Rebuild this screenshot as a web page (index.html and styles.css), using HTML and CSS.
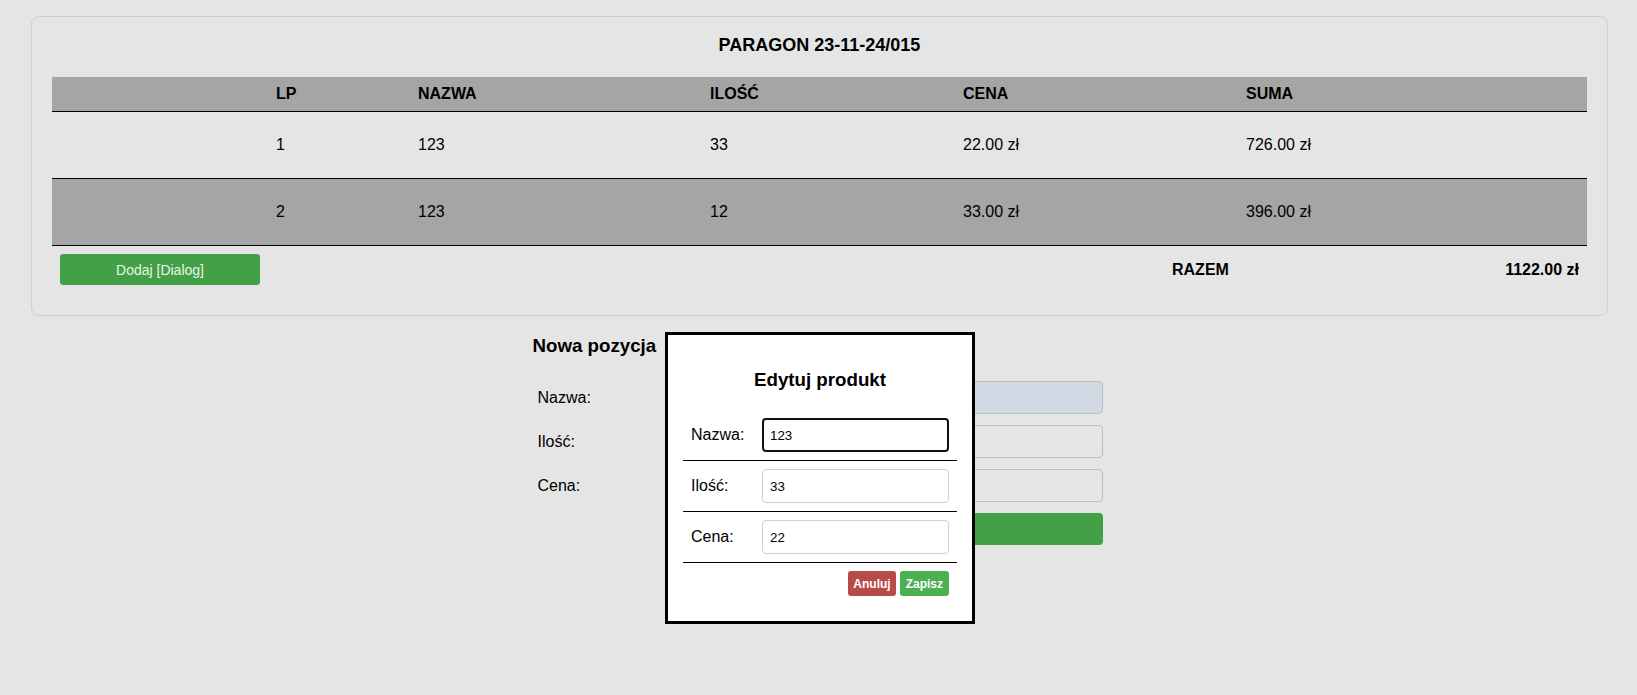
FILE: index.html
```html
<!DOCTYPE html>
<html lang="pl">
<head>
<meta charset="utf-8">
<title>Paragon</title>
<link rel="stylesheet" href="styles.css">
</head>
<body>
<section class="receipt">
  <div class="receipt-title">PARAGON 23-11-24/015</div>
  <table class="items">
    <colgroup>
      <col class="c-sel"><col class="c-lp"><col class="c-name"><col class="c-qty"><col class="c-price"><col class="c-sum">
    </colgroup>
    <thead>
      <tr><th></th><th>LP</th><th>NAZWA</th><th>ILOŚĆ</th><th>CENA</th><th>SUMA</th></tr>
    </thead>
    <tbody>
      <tr><td></td><td>1</td><td>123</td><td>33</td><td>22.00 zł</td><td>726.00 zł</td></tr>
      <tr class="alt"><td></td><td>2</td><td>123</td><td>12</td><td>33.00 zł</td><td>396.00 zł</td></tr>
    </tbody>
  </table>
  <div class="receipt-footer">
    <button class="btn-add" type="button">Dodaj [Dialog]</button>
    <div class="total-label">RAZEM</div>
    <div class="total-value">1122.00 zł</div>
  </div>
</section>

<form class="new-item">
  <h3 class="new-title">Nowa pozycja</h3>
  <div class="new-grid">
    <label class="new-label" for="n-name">Nazwa:</label>
    <input id="n-name" class="new-input autofill" type="text">
    <label class="new-label" for="n-qty">Ilość:</label>
    <input id="n-qty" class="new-input" type="text">
    <label class="new-label" for="n-price">Cena:</label>
    <input id="n-price" class="new-input" type="text">
    <span></span>
    <button class="new-submit" type="button">Dodaj</button>
  </div>
</form>

<div class="dialog" role="dialog">
  <h3 class="dialog-title">Edytuj produkt</h3>
  <table class="edit">
    <tr>
      <td class="edit-label">Nazwa:</td>
      <td class="edit-cell"><input class="field focused" type="text" value="123"></td>
    </tr>
    <tr>
      <td class="edit-label">Ilość:</td>
      <td class="edit-cell"><input class="field" type="text" value="33"></td>
    </tr>
    <tr>
      <td class="edit-label">Cena:</td>
      <td class="edit-cell"><input class="field" type="text" value="22"></td>
    </tr>
    <tr class="edit-actions-row">
      <td colspan="2">
        <div class="edit-actions">
          <button class="btn-cancel" type="button">Anuluj</button>
          <button class="btn-save" type="button">Zapisz</button>
        </div>
      </td>
    </tr>
  </table>
</div>
</body>
</html>
```

FILE: styles.css
```css
html, body {
  margin: 0;
  padding: 0;
}

body {
  background: #e5e5e5;
  color: #000;
  font-family: "Liberation Sans", Arial, sans-serif;
  font-size: 16px;
  position: relative;
  min-height: 695px;
}

/* ---------- receipt panel ---------- */
.receipt {
  margin: 16px 29px 0 31px;
  padding: 18px 20px 22px;
  border: 1px solid #cfcfcf;
  border-radius: 8px;
  background: #e5e5e5;
}

.receipt-title {
  text-align: center;
  font-weight: bold;
  font-size: 18px;
  line-height: 21px;
  margin-bottom: 21px;
}

.items {
  width: 100%;
  border-collapse: collapse;
  table-layout: fixed;
}

.c-sel { width: 216px; }
.c-lp { width: 142px; }
.c-name { width: 292px; }
.c-qty { width: 253px; }
.c-price { width: 283px; }

.items th {
  background: #a5a5a5;
  text-align: left;
  font-weight: bold;
  line-height: 18px;
  padding: 8px 8px;
  border-bottom: 1px solid #000;
}

.items td {
  text-align: left;
  line-height: 18px;
  padding: 24px 8px;
  border-bottom: 1px solid #000;
}

.items tr.alt td {
  background: #a5a5a5;
}

.receipt-footer {
  display: flex;
  align-items: center;
  padding: 8px;
}

.btn-add {
  width: 200px;
  height: 31px;
  border: none;
  border-radius: 3px;
  background: #43a047;
  color: #e8f5e9;
  font-family: "Liberation Sans", Arial, sans-serif;
  font-size: 14px;
  padding: 0;
}

.total-label {
  margin-left: auto;
  width: 200px;
  font-weight: bold;
}

.total-value {
  width: 207px;
  text-align: right;
  font-weight: bold;
}

/* ---------- new item form ---------- */
.new-item {
  width: 570px;
  padding-right: 2px;
  margin: 19px auto 0;
}

.new-title {
  margin: 0;
  font-size: 18.72px;
  line-height: 21px;
}

.new-grid {
  display: grid;
  grid-template-columns: 160px 1fr;
  row-gap: 11px;
  align-items: center;
  margin-top: 25px;
}

.new-label {
  padding-left: 5px;
}

.new-input {
  box-sizing: border-box;
  height: 33px;
  border: 1px solid #bdbdbd;
  border-radius: 4px;
  background: transparent;
  font-family: "Liberation Sans", Arial, sans-serif;
}

.new-input.autofill {
  background: #d0d9e4;
}

.new-submit {
  height: 32px;
  border: none;
  border-radius: 4px;
  background: #43a047;
  color: #fff;
  font-family: "Liberation Sans", Arial, sans-serif;
  font-size: 14px;
}

/* ---------- edit dialog (overlay) ---------- */
.dialog {
  position: absolute;
  top: 332px;
  left: 665px;
  width: 274px;
  padding: 15px 15px 17px;
  border: 3px solid #000;
  background: #fff;
}

.dialog-title {
  margin: 18.72px 0 20.72px;
  text-align: center;
  font-size: 18.72px;
  line-height: 21px;
}

.edit {
  width: 100%;
  border-collapse: collapse;
}

.edit td {
  padding: 8px;
  border-bottom: 1px solid #000;
  vertical-align: middle;
}

.edit .edit-actions-row td {
  border-bottom: none;
}

.edit-label {
  width: 55px;
  line-height: 18px;
}

.field {
  box-sizing: border-box;
  display: block;
  width: 187px;
  height: 34px;
  padding: 0 7px;
  border: 1px solid #cfcfcf;
  border-radius: 4px;
  background: #fff;
  color: #000;
  font-family: "Liberation Sans", Arial, sans-serif;
  font-size: 13.33px;
}

.field.focused {
  border: 2px solid #111;
  padding: 0 6px;
}

.edit-actions {
  display: flex;
  justify-content: flex-end;
  gap: 4px;
}

.btn-cancel,
.btn-save {
  height: 25px;
  padding: 0 6px;
  border: none;
  border-radius: 3px;
  color: #fff;
  font-family: "Liberation Sans", Arial, sans-serif;
  font-size: 12px;
  font-weight: bold;
}

.btn-cancel {
  background: #b94a4a;
  padding: 0 5px;
}

.btn-save {
  background: #4caf50;
}
```
